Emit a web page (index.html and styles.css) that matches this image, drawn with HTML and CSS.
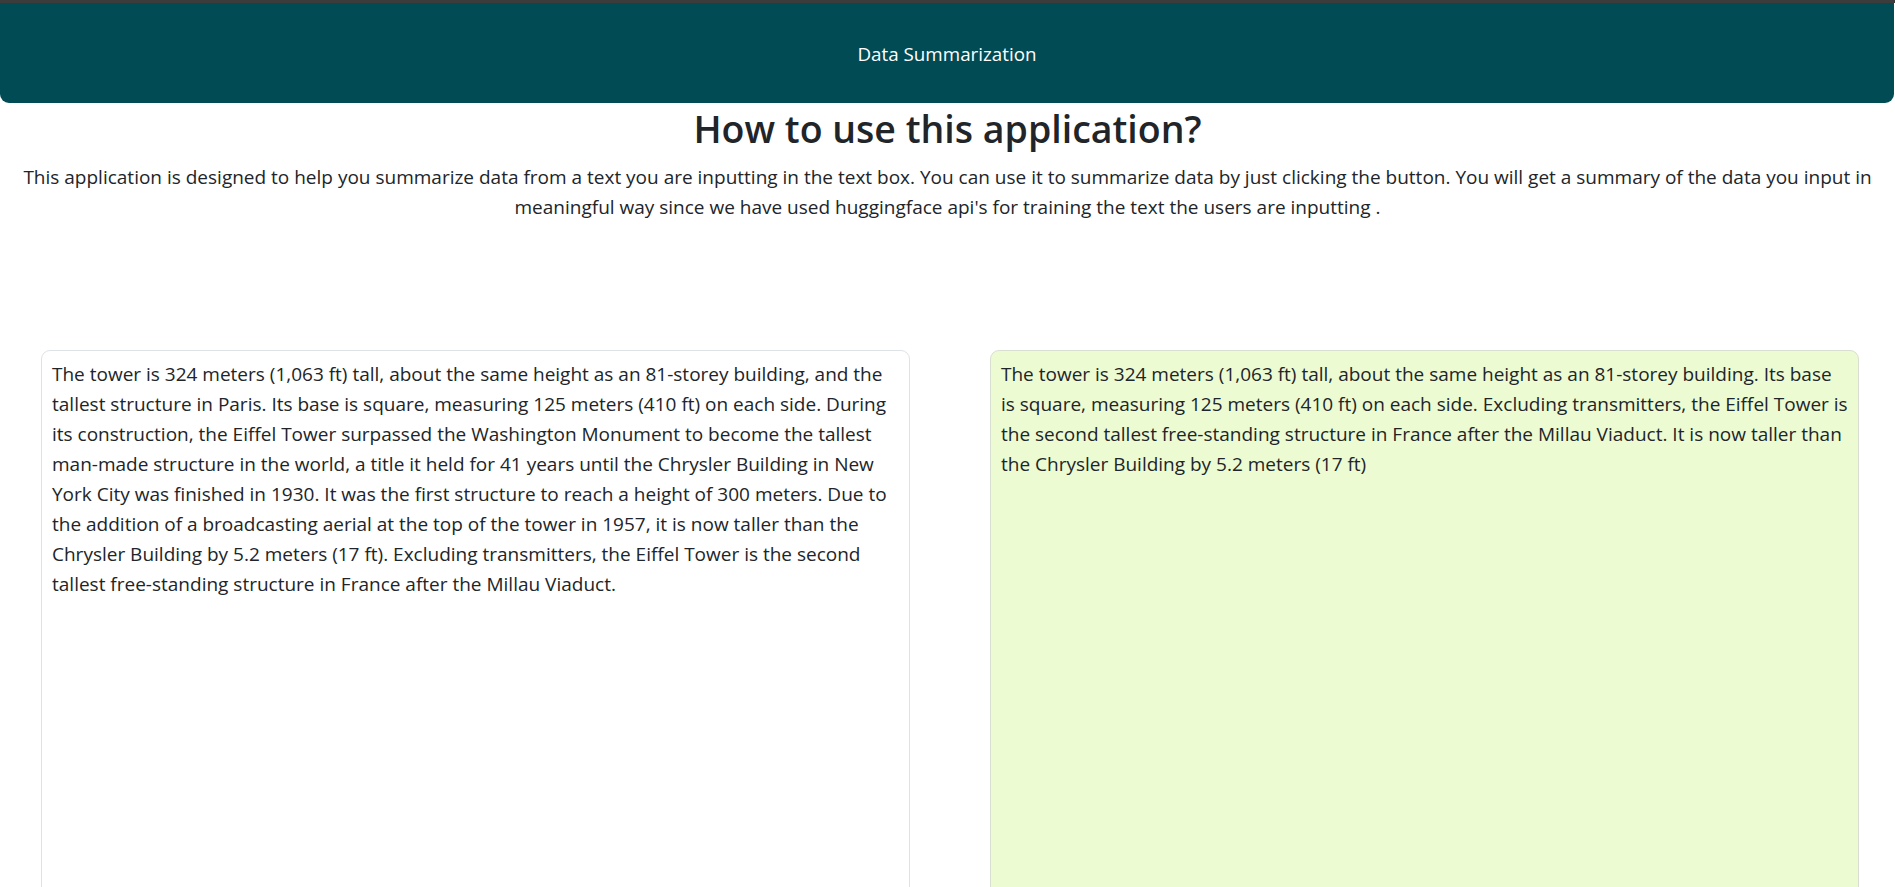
FILE: index.html
```html
<!DOCTYPE html>
<html lang="en">
<head>
<meta charset="utf-8">
<title>Data Summarization</title>
<link rel="stylesheet" href="styles.css">
</head>
<body>
<header class="topbar">
  <span class="brand">Data Summarization</span>
</header>
<main class="content">
  <h1 class="title">How to use this application?</h1>
  <p class="intro">This application is designed to help you summarize data from a text you are inputting in the text box. You can use it to summarize data by just clicking the button. You will get a summary of the data you input in meaningful way since we have used huggingface api's for training the text the users are inputting .</p>
  <section class="panels">
    <textarea class="panel panel-input">The tower is 324 meters (1,063 ft) tall, about the same height as an 81-storey building, and the tallest structure in Paris. Its base is square, measuring 125 meters (410 ft) on each side. During its construction, the Eiffel Tower surpassed the Washington Monument to become the tallest man-made structure in the world, a title it held for 41 years until the Chrysler Building in New York City was finished in 1930. It was the first structure to reach a height of 300 meters. Due to the addition of a broadcasting aerial at the top of the tower in 1957, it is now taller than the Chrysler Building by 5.2 meters (17 ft). Excluding transmitters, the Eiffel Tower is the second tallest free-standing structure in France after the Millau Viaduct.</textarea>
    <div class="panel panel-output">The tower is 324 meters (1,063 ft) tall, about the same height as an 81-storey building. Its base is square, measuring 125 meters (410 ft) on each side. Excluding transmitters, the Eiffel Tower is the second tallest free-standing structure in France after the Millau Viaduct. It is now taller than the Chrysler Building by 5.2 meters (17 ft)</div>
  </section>
</main>
</body>
</html>
```

FILE: styles.css
```css
html, body {
  margin: 0;
  padding: 0;
  height: 887px;
  overflow: hidden;
}
body {
  border-top: 3px solid #3c3c3c;
  background: #ffffff;
  color: #212529;
  font-family: "Open Sans", "Noto Sans", sans-serif;
  font-size: 19px;
  line-height: 30px;
}
.topbar {
  height: 100px;
  margin-right: 1px;
  background: #014b55;
  border-radius: 0 0 9px 9px;
  display: flex;
  align-items: center;
  justify-content: center;
  padding-top: 2px;
  box-sizing: border-box;
}
.brand {
  color: #ffffff;
  font-size: 18.8px;
}
.content {
  display: flex;
  flex-direction: column;
}
.title {
  margin: 3px 0 0;
  text-align: center;
  font-size: 37.5px;
  font-weight: 600;
  line-height: 46px;
  color: #212529;
}
.intro {
  margin: 10px 0 0;
  padding: 0 20px;
  text-align: center;
}
.panels {
  display: flex;
  gap: 80px;
  padding: 128px 36px 0 41px;
}
.panel {
  flex: 1;
  height: 620px;
  box-sizing: border-box;
  border: 1px solid #dee2e6;
  border-radius: 9px;
  padding: 8px 10px;
  font-family: "Open Sans", "Noto Sans", sans-serif;
  font-size: 19px;
  line-height: 30px;
  color: #212529;
  margin: 0;
}
.panel-input {
  resize: none;
  background: #ffffff;
  outline: none;
}
.panel-output {
  background: #edfbd3;
  border-color: #d9dfd0;
}
```
